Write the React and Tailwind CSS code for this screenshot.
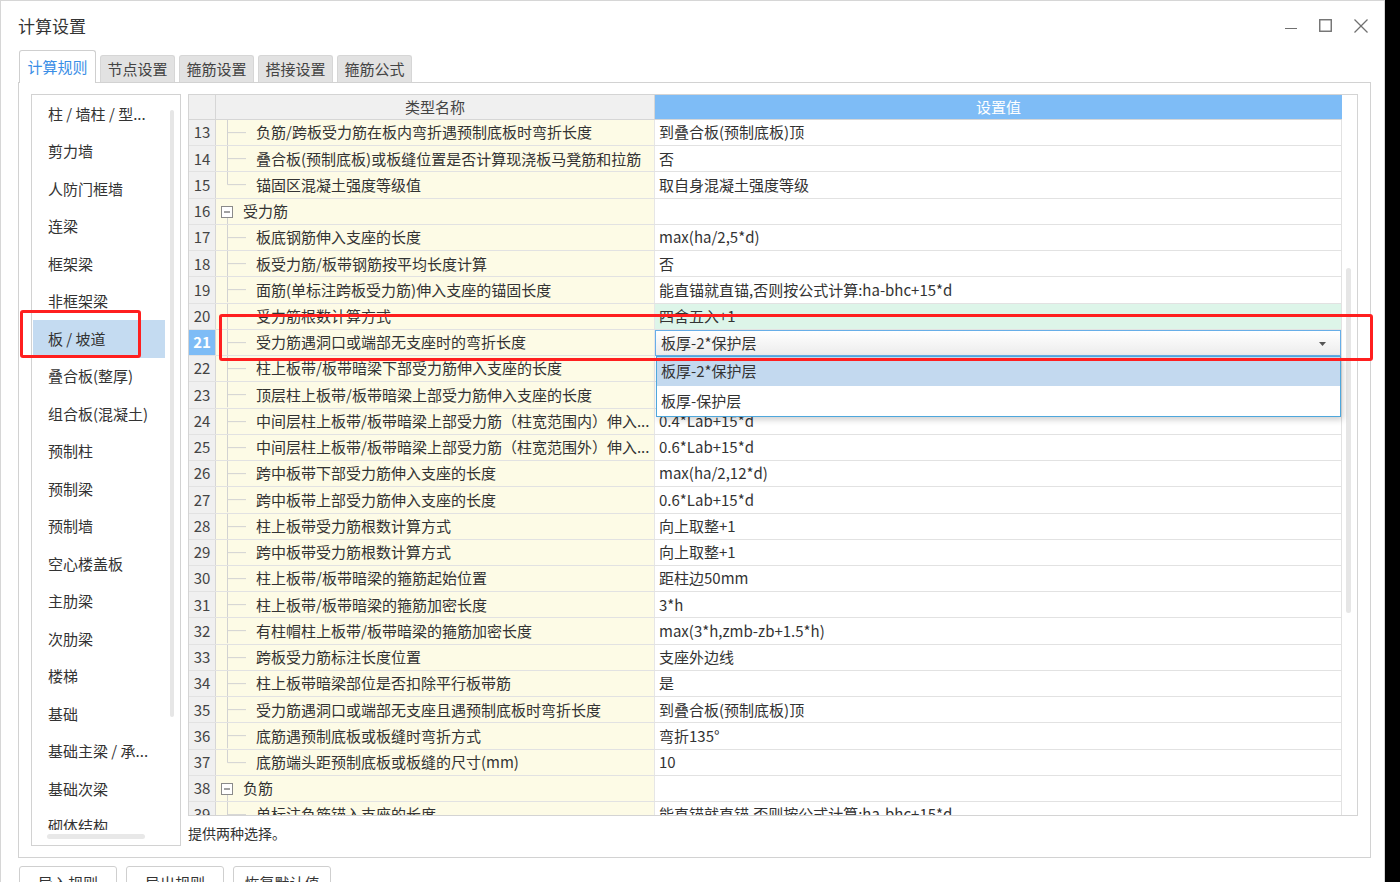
import React from "react";

const rows = [
  { n: 13, t: "负筋/跨板受力筋在板内弯折遇预制底板时弯折长度", v: "到叠合板(预制底板)顶", k: "mid" },
  { n: 14, t: "叠合板(预制底板)或板缝位置是否计算现浇板马凳筋和拉筋", v: "否", k: "mid" },
  { n: 15, t: "锚固区混凝土强度等级值", v: "取自身混凝土强度等级", k: "last" },
  { n: 16, t: "受力筋", v: "", k: "group" },
  { n: 17, t: "板底钢筋伸入支座的长度", v: "max(ha/2,5*d)", k: "mid" },
  { n: 18, t: "板受力筋/板带钢筋按平均长度计算", v: "否", k: "mid" },
  { n: 19, t: "面筋(单标注跨板受力筋)伸入支座的锚固长度", v: "能直锚就直锚,否则按公式计算:ha-bhc+15*d", k: "mid" },
  { n: 20, t: "受力筋根数计算方式", v: "四舍五入+1", k: "mid", green: true },
  { n: 21, t: "受力筋遇洞口或端部无支座时的弯折长度", v: "板厚-2*保护层", k: "mid", sel: true },
  { n: 22, t: "柱上板带/板带暗梁下部受力筋伸入支座的长度", v: "", k: "mid" },
  { n: 23, t: "顶层柱上板带/板带暗梁上部受力筋伸入支座的长度", v: "", k: "mid" },
  { n: 24, t: "中间层柱上板带/板带暗梁上部受力筋（柱宽范围内）伸入...", v: "0.4*Lab+15*d", k: "mid" },
  { n: 25, t: "中间层柱上板带/板带暗梁上部受力筋（柱宽范围外）伸入...", v: "0.6*Lab+15*d", k: "mid" },
  { n: 26, t: "跨中板带下部受力筋伸入支座的长度", v: "max(ha/2,12*d)", k: "mid" },
  { n: 27, t: "跨中板带上部受力筋伸入支座的长度", v: "0.6*Lab+15*d", k: "mid" },
  { n: 28, t: "柱上板带受力筋根数计算方式", v: "向上取整+1", k: "mid" },
  { n: 29, t: "跨中板带受力筋根数计算方式", v: "向上取整+1", k: "mid" },
  { n: 30, t: "柱上板带/板带暗梁的箍筋起始位置", v: "距柱边50mm", k: "mid" },
  { n: 31, t: "柱上板带/板带暗梁的箍筋加密长度", v: "3*h", k: "mid" },
  { n: 32, t: "有柱帽柱上板带/板带暗梁的箍筋加密长度", v: "max(3*h,zmb-zb+1.5*h)", k: "mid" },
  { n: 33, t: "跨板受力筋标注长度位置", v: "支座外边线", k: "mid" },
  { n: 34, t: "柱上板带暗梁部位是否扣除平行板带筋", v: "是", k: "mid" },
  { n: 35, t: "受力筋遇洞口或端部无支座且遇预制底板时弯折长度", v: "到叠合板(预制底板)顶", k: "mid" },
  { n: 36, t: "底筋遇预制底板或板缝时弯折方式", v: "弯折135°", k: "mid" },
  { n: 37, t: "底筋端头距预制底板或板缝的尺寸(mm)", v: "10", k: "last" },
  { n: 38, t: "负筋", v: "", k: "group" },
  { n: 39, t: "单标注负筋锚入支座的长度", v: "能直锚就直锚,否则按公式计算:ha-bhc+15*d", k: "mid" },
];

const items = [
  "柱 / 墙柱 / 型...",
  "剪力墙",
  "人防门框墙",
  "连梁",
  "框架梁",
  "非框架梁",
  "板 / 坡道",
  "叠合板(整厚)",
  "组合板(混凝土)",
  "预制柱",
  "预制梁",
  "预制墙",
  "空心楼盖板",
  "主肋梁",
  "次肋梁",
  "楼梯",
  "基础",
  "基础主梁 / 承...",
  "基础次梁",
  "砌体结构",
];

function Tree({ k }) {
  if (k === "group") {
    return (
      <svg width="27" height="100%" className="shrink-0 h-full">
        <rect x="5.5" y="7.5" width="11" height="11" fill="white" stroke="#8a8a8a" strokeWidth="1" />
        <line x1="8" y1="13" x2="14" y2="13" stroke="#444" strokeWidth="1" />
        <line x1="11.5" y1="19" x2="11.5" y2="100%" stroke="#d2d2d2" strokeWidth="1" />
      </svg>
    );
  }
  return (
    <svg width="40" height="100%" className="shrink-0 h-full">
      <line x1="11.5" y1="0" x2="11.5" y2={k === "last" ? "50%" : "100%"} stroke="#d2d2d2" strokeWidth="1" />
      <line x1="11.5" y1="50%" x2="30" y2="50%" stroke="#d2d2d2" strokeWidth="1" />
    </svg>
  );
}

export default function App() {
  return (
    <div className="w-[1400px] h-[882px] overflow-hidden bg-black flex font-['Noto_Sans_CJK_SC','Noto_Sans',sans-serif] text-[#333]">
      <div className="relative w-[1385px] h-[882px] bg-white border-t border-l border-r border-[#d6d6d6] flex flex-col">
        {/* title bar */}
        <div className="h-[49px] shrink-0 flex items-center pl-[17px] pr-[16px]">
          <div className="text-[17px] leading-[24px] text-[#333]">计算设置</div>
          <div className="ml-auto flex items-center gap-[22px]">
            <svg width="12" height="12" viewBox="0 0 12 12">
              <line x1="0" y1="8.5" x2="12" y2="8.5" stroke="#707070" strokeWidth="1" />
            </svg>
            <svg width="13" height="13" viewBox="0 0 13 13">
              <rect x="0.75" y="0.75" width="11.5" height="11.5" fill="none" stroke="#707070" strokeWidth="1.4" />
            </svg>
            <svg width="14" height="14" viewBox="0 0 14 14">
              <line x1="0.5" y1="0.5" x2="13.5" y2="13.5" stroke="#707070" strokeWidth="1.3" />
              <line x1="13.5" y1="0.5" x2="0.5" y2="13.5" stroke="#707070" strokeWidth="1.3" />
            </svg>
          </div>
        </div>

        {/* tabs */}
        <div className="h-[32px] shrink-0 flex items-end pl-[18px] gap-[4px] relative z-10">
          <div className="w-[77px] h-[33px] -mb-px bg-white border border-b-0 border-[#cfcfcf] rounded-t-[3px] flex items-center justify-center text-[15px] text-[#3a8ee6]">
            计算规则
          </div>
          {["节点设置", "箍筋设置", "搭接设置", "箍筋公式"].map((t) => (
            <div
              key={t}
              className="w-[75px] h-[27px] bg-[#e2e2e2] border border-b-0 border-[#d6d6d6] rounded-t-[3px] flex items-center justify-center text-[15px] text-[#444]"
            >
              {t}
            </div>
          ))}
        </div>

        {/* panel */}
        <div className="ml-[17px] w-[1353px] h-[776px] shrink-0 border border-[#d2d2d2] pt-[11px] pl-[12px] pr-[11px] flex gap-[7px]">
          {/* left list */}
          <div className="relative w-[150px] h-[752px] border border-[#d2d2d2] bg-white">
            <div className="h-[735px] overflow-hidden">
              {items.map((it, i) => (
                <div
                  key={it}
                  className={
                    "ml-[1px] w-[132px] h-[37.5px] pl-[15px] flex items-center text-[15px] whitespace-nowrap " +
                    (i === 6 ? "bg-[#c4dbf1] text-[#333]" : "text-[#333]")
                  }
                >
                  {it}
                </div>
              ))}
            </div>
            <div className="absolute left-[138px] top-[15px] w-[4px] h-[607px] rounded-full bg-[#e6e6e6]" />
            <div className="absolute left-[15px] top-[739px] w-[98px] h-[5px] rounded-full bg-[#e8e8e8]" />
          </div>

          {/* right */}
          <div className="flex flex-col">
            <div className="relative w-[1170px] h-[722px] border border-[#d4d4d4] flex overflow-hidden">
              <div className="w-[1153px] flex flex-col">
                {/* header */}
                <div className="h-[25px] shrink-0 flex border-b border-[#d6d6d6]">
                  <div className="w-[27px] bg-[#f0f0f0] border-r border-[#d6d6d6]" />
                  <div className="w-[439px] bg-[#f0f0f0] border-r border-[#d6d6d6] flex items-center justify-center text-[15px] text-[#444]">
                    类型名称
                  </div>
                  <div className="w-[687px] bg-[#7ebcf6] flex items-center justify-center text-[15px] text-white">
                    设置值
                  </div>
                </div>
                {/* rows */}
                <div className="flex flex-col">
                  {rows.map((r) => (
                    <div key={r.n} className="h-[26.24px] shrink-0 flex border-b border-[#e2e2e2]">
                      <div
                        className={
                          "w-[27px] shrink-0 border-r border-[#d6d6d6] flex items-center justify-center text-[15px] " +
                          (r.sel ? "bg-[#7ebcf6] text-white font-bold" : "bg-[#f0f0f0] text-[#444]")
                        }
                      >
                        {r.n}
                      </div>
                      <div className="w-[439px] shrink-0 bg-[#fdfbe6] border-r border-[#e6e6e6] flex items-center text-[15px] whitespace-nowrap overflow-hidden">
                        <Tree k={r.k} />
                        <span>{r.t}</span>
                      </div>
                      <div
                        className={
                          "relative w-[687px] shrink-0 border-r border-[#e2e2e2] flex items-center text-[15px] whitespace-nowrap " +
                          (r.green ? "bg-[#ddf5e9]" : "bg-white")
                        }
                      >
                        {r.sel ? (
                          <>
                            <div className="absolute left-0 top-0 w-[686px] h-[26px] border border-[#67aee8] bg-gradient-to-b from-white to-[#ececec] flex items-center pl-[5px]">
                              <span>{r.v}</span>
                              <svg className="absolute right-[14px] top-[11px]" width="7" height="4" viewBox="0 0 7 4">
                                <path d="M0 0 L7 0 L3.5 4 Z" fill="#555" />
                              </svg>
                            </div>
                            <div className="absolute z-20 left-[1px] top-[26px] w-[685px] h-[61px] border border-[#4ea7dc] bg-white shadow-[2px_3px_6px_rgba(0,0,0,0.18)] flex flex-col">
                              <div className="h-[29px] bg-[#c3d9ef] flex items-center pl-[4px]">板厚-2*保护层</div>
                              <div className="h-[30px] flex items-center pl-[4px]">板厚-保护层</div>
                            </div>
                          </>
                        ) : (
                          <span className="pl-[4px]">{r.v}</span>
                        )}
                      </div>
                    </div>
                  ))}
                </div>
              </div>
              <div className="relative w-[15px] bg-white">
                <div className="absolute left-[4px] top-[173px] w-[5px] h-[345px] rounded-full bg-[#e6e6e6]" />
              </div>
            </div>
            <div className="pt-[8px] text-[14px] leading-[18px] text-[#333]">提供两种选择。</div>
          </div>
        </div>

        {/* bottom buttons */}
        <div className="flex gap-[9px] pl-[18px] mt-[8px]">
          {["导入规则", "导出规则", "恢复默认值"].map((b) => (
            <div
              key={b}
              className="w-[98px] h-[30px] border border-[#cfcfcf] rounded-[3px] bg-white flex items-center justify-center pt-[4px] text-[15px] leading-[20px] text-[#333]"
            >
              {b}
            </div>
          ))}
        </div>

        {/* red annotation boxes */}
        <div className="absolute left-[19px] top-[309px] w-[121px] h-[48px] border-[3px] border-[#ff1f1f] rounded-[3px] pointer-events-none z-30" />
        <div className="absolute left-[218px] top-[313px] w-[1154px] h-[47px] border-[3px] border-[#ff1f1f] rounded-[3px] pointer-events-none z-30" />
      </div>
    </div>
  );
}
